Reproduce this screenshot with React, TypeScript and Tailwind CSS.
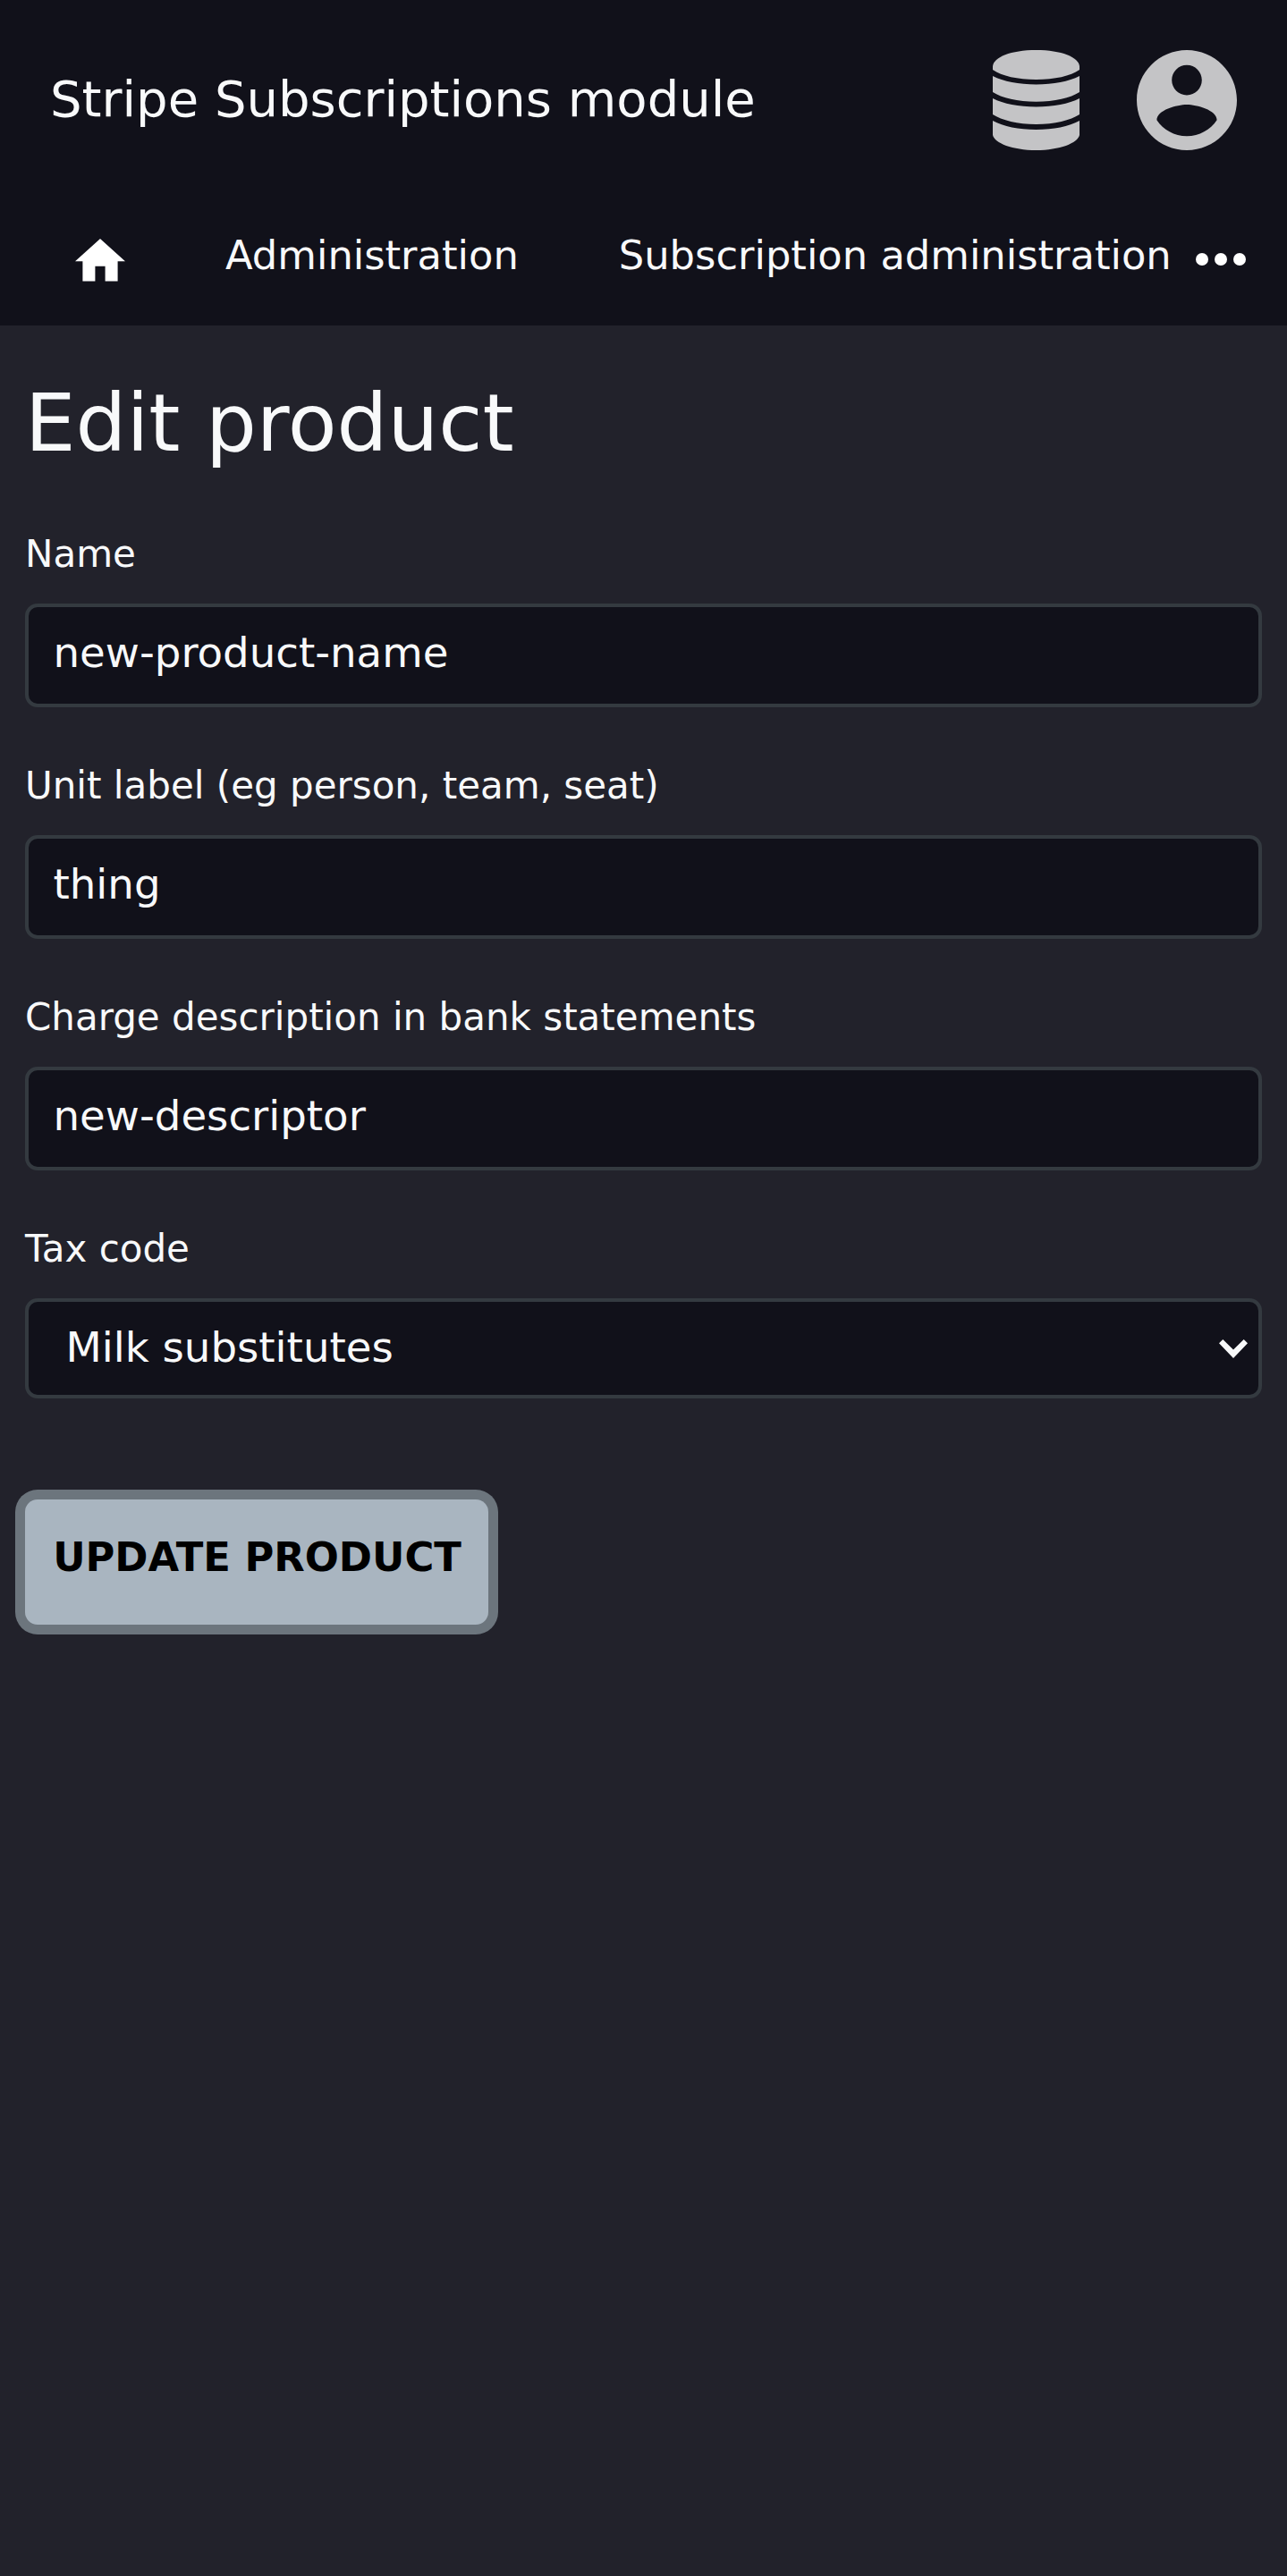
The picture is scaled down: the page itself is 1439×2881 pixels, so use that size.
import React from "react";

const textFields = [
  { id: "name", label: "Name", value: "new-product-name" },
  { id: "unit", label: "Unit label (eg person, team, seat)", value: "thing" },
  { id: "descriptor", label: "Charge description in bank statements", value: "new-descriptor" },
];

function DatabaseIcon() {
  return (
    <svg className="h-28 w-[97px]" viewBox="0 0 97 112" fill="#c4c4c6" aria-hidden="true">
      <path d="M0 18C1 8 20 0 48.500 0S96 8 97 18V22C87 29 69 33 48.500 33S10 29 0 22Z" />
      <path d="M0 29C12 35 29 38.500 48.500 38.500S85 35 97 29V47C87 53.500 69 57.700 48.500 57.700S10 53.500 0 47Z" />
      <path d="M0 54C12 60 29 63.500 48.500 63.500S85 60 97 54V72C87 78.500 69 83 48.500 83S10 78.500 0 72Z" />
      <path d="M0 79C12 85.500 29 89 48.500 89S85 85.500 97 79V95C95 104 75 112 48.500 112S2 104 0 95Z" />
    </svg>
  );
}

function AccountIcon() {
  return (
    <svg className="size-28" viewBox="2 2 20 20" fill="#c4c4c6" aria-hidden="true">
      <path d="M12 2C6.480 2 2 6.480 2 12s4.480 10 10 10 10-4.480 10-10S17.520 2 12 2zm0 3c1.660 0 3 1.340 3 3s-1.340 3-3 3-3-1.340-3-3 1.340-3 3-3zm0 14.200c-2.500 0-4.710-1.280-6-3.220.030-1.990 4-3.080 6-3.080 1.990 0 5.970 1.090 6 3.080-1.290 1.940-3.500 3.220-6 3.220z" />
    </svg>
  );
}

export default function App() {
  return (
    <div className="min-h-[2881px] w-[1439px] overflow-hidden bg-[#22222b] font-['DejaVu_Sans'] text-[#f8f9fa]">
      <header className="h-[364px] bg-[#11111a]">
        <div className="flex h-56 items-center px-14">
          <div className="flex-1 pb-[3px] text-[56px] leading-[64px] whitespace-nowrap">Stripe Subscriptions module</div>
          <div className="flex gap-16">
            <DatabaseIcon />
            <AccountIcon />
          </div>
        </div>
        <nav className="flex pt-[34px] text-[44.8px] leading-[56px] whitespace-nowrap">
          <a className="mt-[9px] ml-[84px] w-14" aria-label="Home">
            <svg className="block h-[47.600px] w-14" viewBox="2 3 20 17" fill="#fff" aria-hidden="true">
              <path d="M10 20v-6h4v6h5v-8h3L12 3 2 12h3v8z" />
            </svg>
          </a>
          <a className="ml-28">Administration</a>
          <a className="ml-28">Subscription administration</a>
          <button className="mt-[25px] ml-[27px] h-3.5 w-14" aria-label="More">
            <svg className="block h-3.5 w-14" viewBox="0 0 56 14" fill="#fff" aria-hidden="true">
              <circle cx="7" cy="7" r="7" />
              <circle cx="28" cy="7" r="7" />
              <circle cx="49" cy="7" r="7" />
            </svg>
          </button>
        </nav>
      </header>
      <main className="px-7 pt-[55px]">
        <h1 className="h-28 text-[89.6px] leading-[108px]">Edit product</h1>
        <form className="pt-[61px]">
          {textFields.map((f) => (
            <div key={f.id} className="h-[259px]">
              <label htmlFor={f.id} className="block h-[83px] text-[42px] leading-[56px]">{f.label}</label>
              <input
                id={f.id}
                defaultValue={f.value}
                className="block h-[116px] w-full rounded-[14px] border-4 border-[#343a40] bg-[#11111a] px-[27.5px] pb-1.5 text-[46.667px] outline-none"
              />
            </div>
          ))}
          <div className="h-[308px]">
            <div className="h-[83px] text-[42px] leading-[56px]">Tax code</div>
            <div
              role="combobox"
              aria-expanded="false"
              className="flex h-[112px] items-center justify-between rounded-[14px] border-4 border-[#343a40] bg-[#11111a] pr-[12px] pb-[3px] pl-[41.5px] text-[46.667px]"
            >
              <span>Milk substitutes</span>
              <svg className="mt-1 h-[21px] w-8" viewBox="0 0 32 21" fill="#f8f9fa" aria-hidden="true">
                <path d="M0 4.300 4.300 0 16 11.500 27.700 0 32 4.300 16 21Z" />
              </svg>
            </div>
          </div>
          <button
            type="button"
            className="block h-[140px] w-[518px] rounded-[14px] bg-[#a9b5c0] pb-[10px] pl-[1px] text-[44.8px] font-bold whitespace-nowrap text-black ring-[11px] ring-[#6c757d]"
          >
            UPDATE PRODUCT
          </button>
        </form>
      </main>
    </div>
  );
}
